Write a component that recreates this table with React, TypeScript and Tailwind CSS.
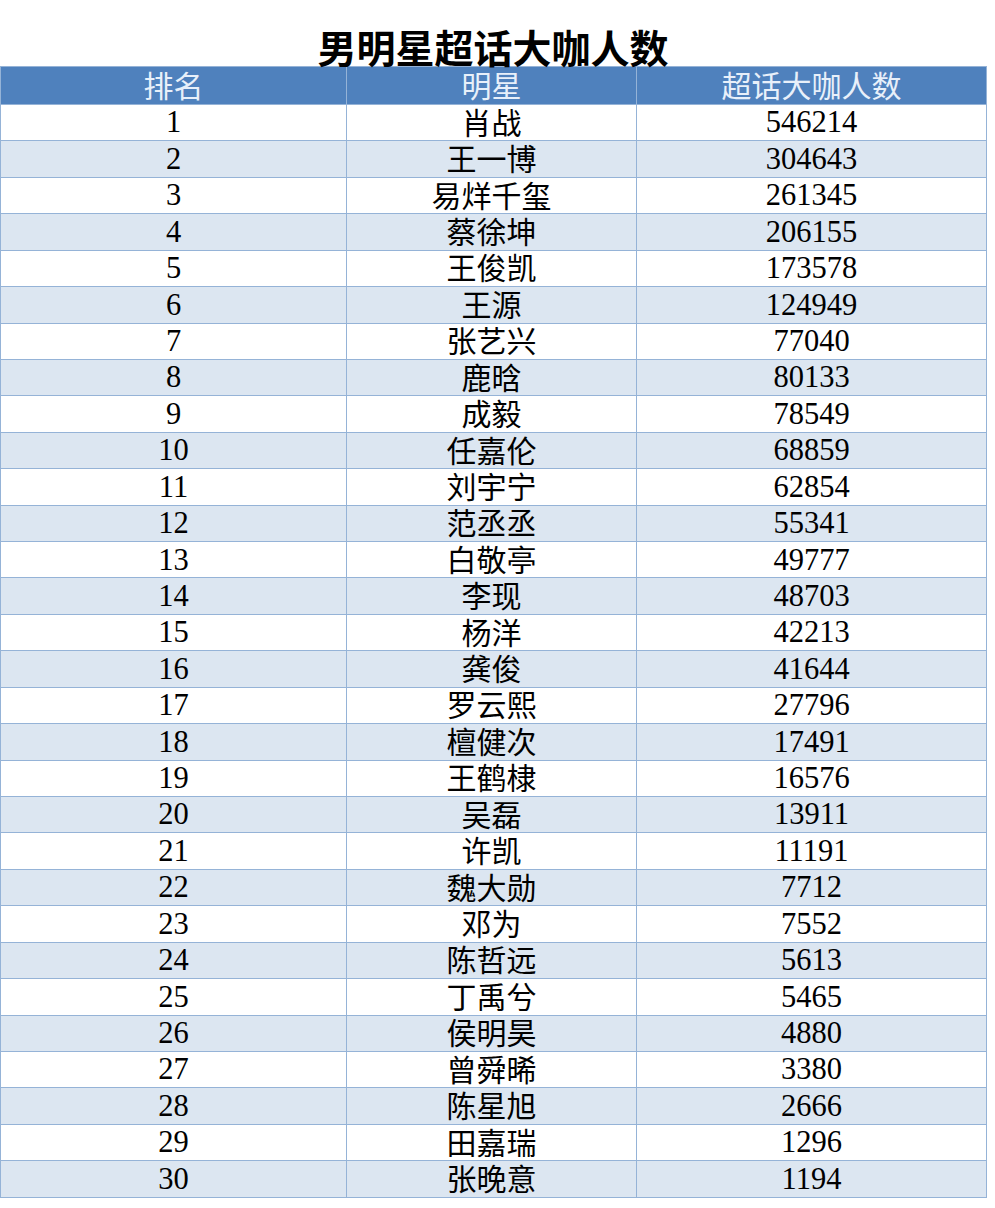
const rows: [string, number][] = [
  ['肖战', 546214],
  ['王一博', 304643],
  ['易烊千玺', 261345],
  ['蔡徐坤', 206155],
  ['王俊凯', 173578],
  ['王源', 124949],
  ['张艺兴', 77040],
  ['鹿晗', 80133],
  ['成毅', 78549],
  ['任嘉伦', 68859],
  ['刘宇宁', 62854],
  ['范丞丞', 55341],
  ['白敬亭', 49777],
  ['李现', 48703],
  ['杨洋', 42213],
  ['龚俊', 41644],
  ['罗云熙', 27796],
  ['檀健次', 17491],
  ['王鹤棣', 16576],
  ['吴磊', 13911],
  ['许凯', 11191],
  ['魏大勋', 7712],
  ['邓为', 7552],
  ['陈哲远', 5613],
  ['丁禹兮', 5465],
  ['侯明昊', 4880],
  ['曾舜晞', 3380],
  ['陈星旭', 2666],
  ['田嘉瑞', 1296],
  ['张晚意', 1194],
];

const sans = "font-['Noto_Sans_CJK_SC','Noto_Sans',sans-serif]";
const serif = "font-['Liberation_Serif','Noto_Sans_CJK_SC',serif]";
const cell = 'border border-[#95b3d7] px-0 text-center leading-none';

export default function App() {
  return (
    <div className="w-[995px] h-[1208px] bg-white">
      {/* Title */}
      <div className="w-[986px] h-[66px] flex items-end justify-center">
        <h1 className={`${sans} text-[39px] leading-[40px] font-bold text-black`}>男明星超话大咖人数</h1>
      </div>

      {/* Ranking table */}
      <table className="w-[986px] table-fixed border-collapse">
        <colgroup>
          <col className="w-[346px]" />
          <col className="w-[290px]" />
          <col className="w-[350px]" />
        </colgroup>
        <thead>
          <tr className={`h-[38px] bg-[#4f81bd] text-[#e8f0fa] ${sans} text-[30px]`}>
            <th className={`${cell} font-normal pt-0 pb-[4px]`}>排名</th>
            <th className={`${cell} font-normal pt-0 pb-[4px]`}>明星</th>
            <th className={`${cell} font-normal pt-0 pb-[4px]`}>超话大咖人数</th>
          </tr>
        </thead>
        <tbody>
          {rows.map(([name, count], i) => (
            <tr key={name} className={`h-[36.43px] ${i % 2 === 1 ? 'bg-[#dce6f1]' : 'bg-white'} text-black`}>
              <td className={`${cell} ${serif} text-[30.5px] py-0`}>{i + 1}</td>
              <td className={`${cell} ${sans} text-[30px] pt-0 pb-[4px]`}>{name}</td>
              <td className={`${cell} ${serif} text-[30.5px] py-0`}>{count}</td>
            </tr>
          ))}
        </tbody>
      </table>
    </div>
  );
}
